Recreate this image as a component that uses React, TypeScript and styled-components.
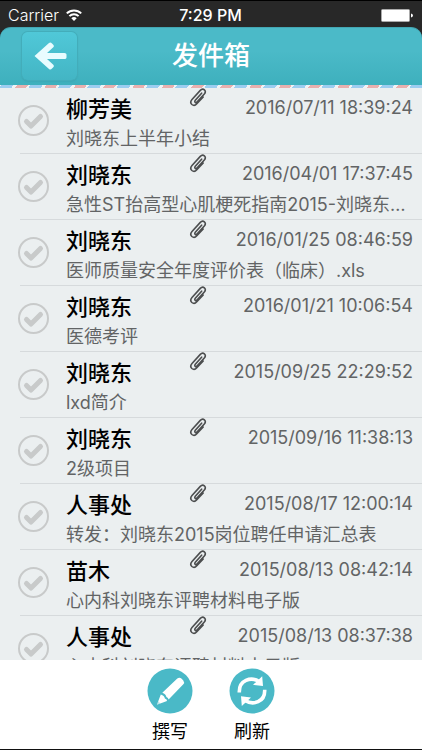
import React from "react";
import styled, { createGlobalStyle } from "styled-components";

const GlobalStyle = createGlobalStyle`
  * { box-sizing: border-box; }
  html, body { margin: 0; padding: 0; background: #282828; }
  body, button, input {
    font-family: Inter, "Noto Sans CJK SC", sans-serif;
  }
  button { border: 0; padding: 0; background: none; cursor: pointer; }
`;

const Screen = styled.div`
  display: flex;
  flex-direction: column;
  height: 100vh;
  overflow: hidden;
  background: #282828;
  border-top: 1px solid #000;
  border-bottom: 1px solid #111;
`;

const StatusBar = styled.div`
  display: grid;
  grid-template-columns: 1fr auto 1fr;
  align-items: center;
  flex: none;
  height: 26px;
  padding: 2px 9px 0 8px;
  color: #fff;
  font-size: 16px;
  line-height: 24px;
`;

const Carrier = styled.span`
  display: flex;
  align-items: center;
  gap: 7px;
  font-weight: 300;
`;

const Clock = styled.time`
  font-weight: 500;
`;

const Battery = styled.svg`
  justify-self: end;
`;

const Header = styled.header`
  display: grid;
  grid-template-columns: 1fr auto 1fr;
  align-items: center;
  flex: none;
  height: 58px;
  padding: 0 22px 2px;
  border-radius: 11px 11px 0 0;
  background: linear-gradient(#4bbac8, #4bbac8 40%, #3eb0bd);
  border-top: 1px solid #43a7b3;
`;

const BackButton = styled.button`
  display: grid;
  place-items: center;
  width: 55px;
  height: 48px;
  border-radius: 6px;
  background: linear-gradient(#50c8d8, #43b5c4);
  box-shadow: 0 0 0 1px #43adba, 0 1px 2px #3599a6;
`;

const Title = styled.h1`
  margin: 0;
  color: #fff;
  font-size: 26px;
  line-height: 36px;
  font-weight: 500;
`;

const AirmailStripe = styled.div`
  flex: none;
  height: 3px;
  background: repeating-linear-gradient(
    125deg,
    #f0f3f4 0 1px,
    #9ccdf0 1px 11px,
    #f0f3f4 11px 14px,
    #e8b0ae 14px 23px,
    #f0f3f4 23px 24px
  );
`;

const MailList = styled.ul`
  flex: 1;
  min-height: 0;
  margin: 0;
  padding: 0;
  list-style: none;
  overflow-y: auto;
  scrollbar-width: none;
  background: #ebeff0;
`;

const MailRow = styled.li`
  display: flex;
  align-items: center;
  gap: 17px;
  height: 66px;
  padding: 0 9px 1px 18px;
  background: linear-gradient(#d6dadc, #d6dadc) 20px 100% / 100% 1px no-repeat;
`;

const SelectLabel = styled.label`
  flex: none;
  display: grid;
  width: 31px;
  height: 31px;
  cursor: pointer;
  color: #c8caca;
  svg { grid-area: 1 / 1; pointer-events: none; }
`;

const SelectBox = styled.input`
  grid-area: 1 / 1;
  appearance: none;
  width: 31px;
  height: 31px;
  margin: 0;
  border: 2px solid #c8caca;
  border-radius: 50%;
  &:checked { border-color: #4ab9c7; }
  &:checked + svg { color: #4ab9c7; }
`;

const MailBody = styled.div`
  flex: 1;
  min-width: 0;
  align-self: stretch;
`;

const MailTop = styled.div`
  display: grid;
  grid-template-columns: 123px 18px 1fr;
  height: 38px;
`;

const Sender = styled.span`
  padding-top: 5px;
  color: #000;
  font-size: 22px;
  line-height: 32px;
  font-weight: 500;
`;

const SentAt = styled.time`
  justify-self: end;
  padding-top: 6px;
  color: #626465;
  font-size: 18px;
  line-height: 28px;
  white-space: nowrap;
`;

const Subject = styled.div`
  overflow: hidden;
  color: #626465;
  font-size: 18px;
  line-height: 26px;
  white-space: nowrap;
  text-overflow: ellipsis;
`;

const Toolbar = styled.nav`
  display: flex;
  justify-content: center;
  gap: 36px;
  flex: none;
  height: 89px;
  padding-top: 8px;
  background: #fff;
`;

const ToolButton = styled.button`
  display: flex;
  flex-direction: column;
  align-items: center;
  gap: 4px;
  width: 46px;
  color: #000;
  font-size: 18px;
  line-height: 28px;
`;

const PaperclipIcon = () => (
  <svg width="18" height="19" viewBox="0 0 18 19" fill="none" stroke="#4c4e4f" strokeWidth="1.6" strokeLinecap="round" role="img" aria-label="附件">
    <path d="M12.6 5.2 6.3 12.2c-.8 1-.6 1.7-.1 2.100.6.5 1.300.4 2-.4L15.300 6c1.300-1.600 1.200-3.200.1-4.200-1.200-1-2.800-.8-4.100.6L3 11.500c-1.500 1.700-1.400 3.800-.1 5 1.400 1.200 3.400 1 4.900-.7L14.200 9" />
  </svg>
);

const TickIcon = () => (
  <svg width="31" height="31" viewBox="0 0 31 31" fill="none" stroke="currentColor" strokeWidth="5" strokeLinecap="round" strokeLinejoin="round" aria-hidden="true">
    <path d="m8.500 16.500 4.500 4.500 9.500-9.500" />
  </svg>
);

const ArrowIcon = () => (
  <svg width="34" height="30" viewBox="0 0 34 30" aria-hidden="true">
    <path d="M1.500 15 16 2q1.500-1.200 3 .4l1.500 1.500q1 1.200-.2 2.300L14 12H31.500q2 0 2 1.500v3q0 1.500-2 1.500H14l6.300 5.800q1.200 1.100.2 2.300l-1.500 1.500q-1.500 1.600-3 .4z" fill="#e9fcff" />
  </svg>
);

const PencilIcon = () => (
  <svg width="46" height="46" viewBox="0 0 46 46" aria-hidden="true">
    <circle cx="23" cy="23" r="22.500" fill="#4ab9c7" />
    <path d="M15.300 24.800 30.300 10.500q2.200-1.800 4.400.2l1.600 1.700q1.700 2.100-.2 4.100L21.600 31.500q-.2-2-2.200-2.500-.4-2.700-4.100-4.200z" fill="#fff" />
    <path d="m13.800 26.500-3.900 10.300 10.100-3.900q.3-1.700-2.100-2.400-.5-2.900-4.100-4z" fill="#fff" />
    <path d="m11.300 33.300-1.400 3.500 3.500-1.300z" fill="#4ab9c7" opacity=".35" />
  </svg>
);

const RefreshIcon = () => (
  <svg width="46" height="46" viewBox="0 0 46 46" aria-hidden="true">
    <circle cx="23" cy="23" r="22.500" fill="#4ab9c7" />
    <g fill="none" stroke="#fff" strokeWidth="3.600">
      <path d="M10.300 24.500C9.800 12 22 8.500 30 13.500" />
      <path d="M35.700 21.800C36.200 34.300 24 37.500 16 32.500" />
    </g>
    <path d="m33.200 8.300.8 9.700-10-1.200zM12.800 38l-.8-9.700 10 1.200z" fill="#fff" />
  </svg>
);

const mails = [
  { sender: "柳芳美", date: "2016/07/11 18:39:24", subject: "刘晓东上半年小结" },
  { sender: "刘晓东", date: "2016/04/01 17:37:45", subject: "急性ST抬高型心肌梗死指南2015-刘晓东小结" },
  { sender: "刘晓东", date: "2016/01/25 08:46:59", subject: "医师质量安全年度评价表（临床）.xls" },
  { sender: "刘晓东", date: "2016/01/21 10:06:54", subject: "医德考评" },
  { sender: "刘晓东", date: "2015/09/25 22:29:52", subject: "lxd简介" },
  { sender: "刘晓东", date: "2015/09/16 11:38:13", subject: "2级项目" },
  { sender: "人事处", date: "2015/08/17 12:00:14", subject: "转发：刘晓东2015岗位聘任申请汇总表" },
  { sender: "苗木", date: "2015/08/13 08:42:14", subject: "心内科刘晓东评聘材料电子版" },
  { sender: "人事处", date: "2015/08/13 08:37:38", subject: "心内科刘晓东评聘材料电子版" },
];

export default function App() {
  return (
    <>
      <GlobalStyle />
      <Screen lang="zh-CN">
        <StatusBar>
          <Carrier>
            Carrier
            <svg width="16" height="12" viewBox="0 0 16 12" aria-hidden="true">
              <g fill="none" stroke="#fff" strokeWidth="2">
                <path d="M.8 4.400a10.300 10.300 0 0 1 14.400 0" />
                <path d="M3.400 7.100a6.600 6.600 0 0 1 9.200 0" />
              </g>
              <path d="M5.300 9.200a4 4 0 0 1 5.400 0L8 12z" fill="#fff" />
            </svg>
          </Carrier>
          <Clock>7:29 PM</Clock>
          <Battery width="32" height="13" viewBox="0 0 32 13" aria-hidden="true">
            <rect x=".5" y=".5" width="28" height="12" rx="1" fill="#fff" stroke="#aaa" />
            <path d="M30 4.500q2 .5 2 2t-2 2z" fill="#fff" />
          </Battery>
        </StatusBar>
        <Header>
          <BackButton type="button" aria-label="返回">
            <ArrowIcon />
          </BackButton>
          <Title>发件箱</Title>
        </Header>
        <AirmailStripe />
        <MailList>
          {mails.map((mail) => (
            <MailRow key={mail.date}>
              <SelectLabel>
                <SelectBox type="checkbox" aria-label={`${mail.sender} ${mail.date}`} />
                <TickIcon />
              </SelectLabel>
              <MailBody>
                <MailTop>
                  <Sender>{mail.sender}</Sender>
                  <PaperclipIcon />
                  <SentAt>{mail.date}</SentAt>
                </MailTop>
                <Subject>{mail.subject}</Subject>
              </MailBody>
            </MailRow>
          ))}
        </MailList>
        <Toolbar>
          <ToolButton type="button">
            <PencilIcon />
            撰写
          </ToolButton>
          <ToolButton type="button">
            <RefreshIcon />
            刷新
          </ToolButton>
        </Toolbar>
      </Screen>
    </>
  );
}
